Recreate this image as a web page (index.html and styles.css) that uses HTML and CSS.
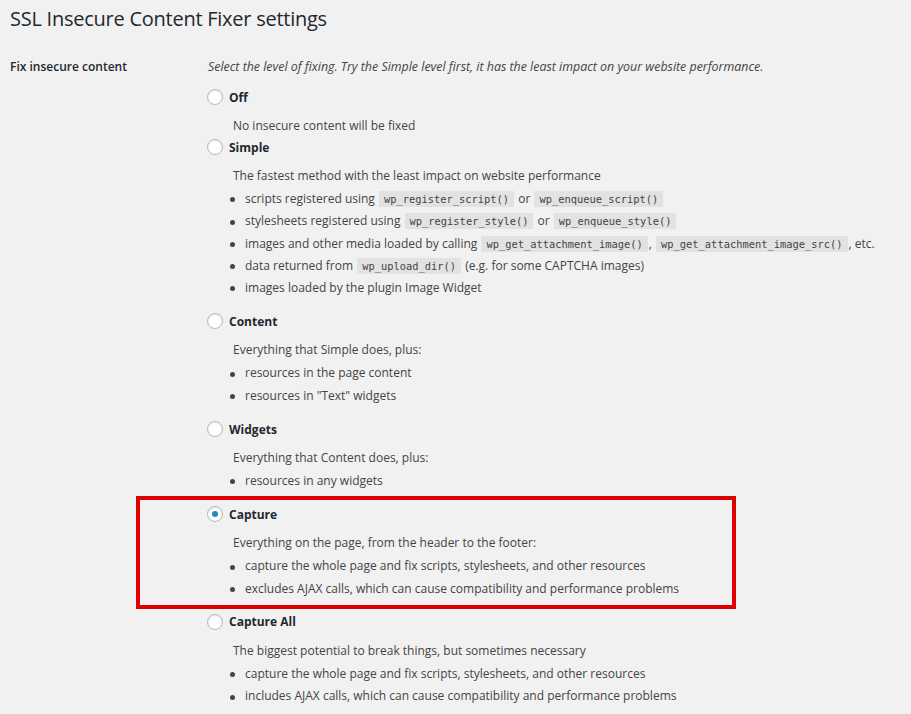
FILE: index.html
```html
<!DOCTYPE html>
<html lang="en">
<head>
  <meta charset="UTF-8" />
  <title>SSL Insecure Content Fixer settings</title>
  <link rel="stylesheet" href="styles.css">
</head>
<body>

<div class="wrap">
  <h1>SSL Insecure Content Fixer settings</h1>

  <div class="form-row">
    <div class="row-label">Fix insecure content</div>
    <div class="row-field">
      <p class="field-desc">Select the level of fixing. Try the Simple level first, it has the least impact on your website performance.</p>

      <div class="option option-off">
        <label class="opt-head"><span class="radio"></span>Off</label>
        <p class="opt-desc">No insecure content will be fixed</p>
      </div>

      <div class="option">
        <label class="opt-head"><span class="radio"></span>Simple</label>
        <p class="opt-desc">The fastest method with the least impact on website performance</p>
        <ul class="opt-list">
          <li>scripts registered using <code>wp_register_script()</code> or <code>wp_enqueue_script()</code></li>
          <li>stylesheets registered using <code>wp_register_style()</code> or <code>wp_enqueue_style()</code></li>
          <li>images and other media loaded by calling <code>wp_get_attachment_image()</code>, <code>wp_get_attachment_image_src()</code>, etc.</li>
          <li>data returned from <code>wp_upload_dir()</code> (e.g. for some CAPTCHA images)</li>
          <li>images loaded by the plugin Image Widget</li>
        </ul>
      </div>

      <div class="option">
        <label class="opt-head"><span class="radio"></span>Content</label>
        <p class="opt-desc">Everything that Simple does, plus:</p>
        <ul class="opt-list">
          <li>resources in the page content</li>
          <li>resources in "Text" widgets</li>
        </ul>
      </div>

      <div class="option">
        <label class="opt-head"><span class="radio"></span>Widgets</label>
        <p class="opt-desc">Everything that Content does, plus:</p>
        <ul class="opt-list">
          <li>resources in any widgets</li>
        </ul>
      </div>

      <div class="option option-marked">
        <label class="opt-head"><span class="radio checked"></span>Capture</label>
        <p class="opt-desc">Everything on the page, from the header to the footer:</p>
        <ul class="opt-list">
          <li>capture the whole page and fix scripts, stylesheets, and other resources</li>
          <li>excludes AJAX calls, which can cause compatibility and performance problems</li>
        </ul>
        <div class="highlight"></div>
      </div>

      <div class="option">
        <label class="opt-head"><span class="radio"></span>Capture All</label>
        <p class="opt-desc">The biggest potential to break things, but sometimes necessary</p>
        <ul class="opt-list">
          <li>capture the whole page and fix scripts, stylesheets, and other resources</li>
          <li>includes AJAX calls, which can cause compatibility and performance problems</li>
        </ul>
      </div>
    </div>
  </div>
</div>

</body>
</html>
```

FILE: styles.css
```css
body {
  margin: 0;
  background: #f1f1f1;
  color: #444;
  font-family: "Open Sans", "Noto Sans", sans-serif;
  font-size: 12px;
  overflow: hidden;
}
.wrap {
  padding: 0 10px;
}
h1 {
  margin: 0;
  padding: 4px 0 0;
  font-size: 20px;
  font-weight: 400;
  letter-spacing: -0.25px;
  line-height: 30px;
  color: #23282d;
}
.form-row {
  display: flex;
  margin-top: 18px;
}
.row-label {
  width: 198px;
  flex: none;
  font-size: 12px;
  font-weight: 600;
  color: #23282d;
  line-height: 30px;
}
.row-field {
  flex: 1;
}
.field-desc {
  margin: 0;
  font-size: 12.4px;
  line-height: 30px;
  font-style: italic;
}
.option {
  position: relative;
  margin-top: 12px;
}
.option-off {
  margin-top: 5px;
}
.option-off + .option {
  margin-top: 0;
}
.opt-head {
  display: flex;
  align-items: center;
  height: 20px;
  font-weight: 700;
  color: #23282d;
}
.radio {
  width: 14px;
  height: 14px;
  margin: 0 6px 0 -1px;
  border: 1px solid #b4b9be;
  border-radius: 50%;
  background: #fff;
  box-shadow: inset 0 1px 2px rgba(0, 0, 0, 0.1);
  display: flex;
  align-items: center;
  justify-content: center;
}
.radio.checked::after {
  content: "";
  width: 6px;
  height: 6px;
  border-radius: 50%;
  background: #1e8cbe;
}
.opt-desc {
  margin: 8px 0 0 25px;
  line-height: 22px;
}
.opt-list {
  list-style: none;
  margin: 1px 0 2px;
  padding: 0 0 0 22px;
}
.opt-list li {
  line-height: 22.3px;
}
.opt-list li::before {
  content: "";
  display: inline-block;
  width: 5px;
  height: 5px;
  margin-right: 10px;
  border-radius: 50%;
  background: #444;
  vertical-align: middle;
}
code {
  font-family: "DejaVu Sans Mono", monospace;
  font-size: 10.4px;
  padding: 2px 5px 2px;
  margin: 0 1px;
  background: rgba(0, 0, 0, 0.06);
}
.highlight {
  position: absolute;
  left: -72px;
  top: -8px;
  width: 592px;
  height: 105px;
  border: 4px solid #e00000;
}
```
